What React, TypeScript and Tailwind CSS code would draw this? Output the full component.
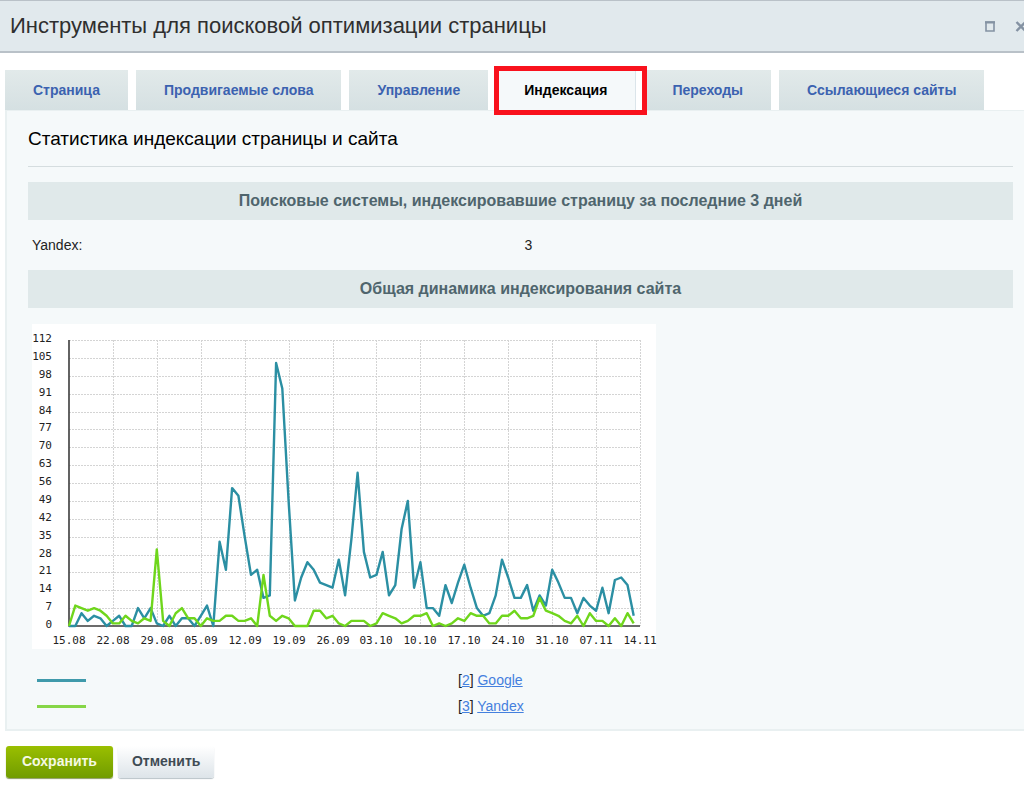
import { useState } from 'react';

const tabs = ['Страница', 'Продвигаемые слова', 'Управление', 'Индексация', 'Переходы', 'Ссылающиеся сайты'];
const highlightedTab = 'Индексация';

const dates = [
  '15.08', '22.08', '29.08', '05.09', '12.09', '19.09', '26.09',
  '03.10', '10.10', '17.10', '24.10', '31.10', '07.11', '14.11',
];

// Indexed pages per day
const google = [
  0, 0, 5, 2, 4, 3, 0, 2, 4, 0, 0, 7, 3, 7, 1, 0, 4, 0, 3, 3, 0, 4, 8, 0, 33, 22, 54, 51, 35, 20,
  22, 11, 12, 103, 93, 49, 10, 19, 25, 22, 17, 16, 15, 26, 12, 34, 60, 29, 19, 20, 29, 12, 16, 38,
  49, 15, 25, 7, 7, 4, 16, 9, 17, 24, 15, 7, 4, 5, 12, 26, 19, 11, 11, 16, 6, 12, 8, 22, 17, 11, 11,
  5, 11, 8, 6, 15, 5, 18, 19, 16, 4,
];
const yandex = [
  0, 8, 7, 6, 7, 6, 4, 1, 1, 4, 2, 1, 3, 2, 30, 2, 0, 5, 7, 3, 3, 0, 3, 2, 2, 4, 4, 2, 2, 3, 0, 20,
  4, 2, 4, 3, 0, 0, 0, 6, 6, 3, 4, 1, 0, 2, 2, 2, 0, 1, 5, 4, 3, 1, 2, 4, 4, 5, 0, 1, 0, 1, 3, 2, 5,
  4, 4, 1, 1, 4, 4, 6, 3, 3, 4, 11, 6, 5, 4, 2, 1, 4, 0, 5, 2, 2, 0, 3, 0, 5, 1,
];

const systems = [
  { id: 2, name: 'Google', line: 'bg-[#3f9aab]' },
  { id: 3, name: 'Yandex', line: 'bg-[#86d647]' },
];

const left = 37;
const bottom = 302;
const plotWidth = 571;
const plotHeight = 286;
const dayX = (day: number) => left + (day * plotWidth) / 91;
const valueY = (value: number) => bottom - (value * plotHeight) / 112;
const toPoints = (values: number[]) => values.map((v, i) => `${dayX(i).toFixed(1)},${valueY(v).toFixed(1)}`).join(' ');

function IndexChart() {
  const steps = Array.from({ length: 17 }, (_, i) => i * 7);

  return (
    <svg width="624" height="325" viewBox="0 0 624 325" role="img" aria-label="Общая динамика индексирования сайта" className="block bg-white overflow-visible">
      <g stroke="#d4d4d4" strokeDasharray="2 1">
        {steps.slice(1).map((v) => (
          <line key={v} x1={left} x2={left + plotWidth} y1={Math.round(valueY(v)) + 0.5} y2={Math.round(valueY(v)) + 0.5} />
        ))}
        {dates.slice(1).map((d, i) => (
          <line key={d} x1={Math.round(dayX((i + 1) * 7)) + 0.5} x2={Math.round(dayX((i + 1) * 7)) + 0.5} y1={bottom - plotHeight} y2={bottom} />
        ))}
      </g>
      <path d={`M${left} ${bottom - plotHeight}V${bottom}H${left + plotWidth}`} fill="none" stroke="#3c3c3c" strokeWidth="1.6" />
      <g fill="none" strokeWidth="2.4" strokeLinejoin="round">
        <polyline points={toPoints(google)} stroke="#2b8fa3" />
        <polyline points={toPoints(yandex)} stroke="#6fd61c" />
      </g>
      <g fill="#222" className="font-['DejaVu_Sans_Mono',monospace] text-[11px]">
        {steps.map((v) => (
          <text key={v} x="20" y={Math.round(valueY(v)) + 2} textAnchor="end">{v}</text>
        ))}
        {dates.map((d, i) => (
          <text key={d} x={Math.round(dayX(i * 7))} y="320" textAnchor="middle">{d}</text>
        ))}
      </g>
    </svg>
  );
}

export default function App() {
  const [active, setActive] = useState(highlightedTab);

  return (
    <div className="min-h-screen overflow-hidden bg-white font-['Liberation_Sans',Arial,sans-serif] text-sm text-[#222]">
      {/* Window title */}
      <header className="flex h-[53px] items-center justify-between border-t border-b-2 border-[#b9c1c8] bg-[#e1e9ed] pl-[10px]">
        <h1 className="text-[22px] leading-7 text-[#2f2f2f]">Инструменты для поисковой оптимизации страницы</h1>
        <div className="-mr-[3px] flex items-center gap-5 text-[#8492a3]">
          <button type="button" aria-label="Развернуть">
            <svg width="10" height="11" viewBox="0 0 10 11" className="block">
              <path d="M1 1V10H9V1" fill="none" stroke="currentColor" strokeWidth="1.6" />
              <path d="M0 1.3H10" stroke="currentColor" strokeWidth="2.4" />
            </svg>
          </button>
          <button type="button" aria-label="Закрыть">
            <svg width="12" height="11" viewBox="0 0 12 11" className="block">
              <path d="M1.5 1L10.5 10M10.5 1L1.5 10" stroke="currentColor" strokeWidth="2.4" />
            </svg>
          </button>
        </div>
      </header>

      <div className="pt-[17px] pl-[5px]">
        <div role="tablist" className="flex gap-2">
          {tabs.map((tab) => (
            <button
              key={tab}
              type="button"
              role="tab"
              aria-selected={tab === active}
              onClick={() => setActive(tab)}
              className={`relative h-10 px-7 text-[14px] font-bold whitespace-nowrap ${
                tab === active
                  ? 'border-r border-[#dbe5ea] bg-[#f5f9fa] text-black'
                  : 'bg-linear-to-b from-[#e2eaea] to-[#d5e0e2] text-[#3b62b0]'
              }`}
            >
              {tab}
              {tab === highlightedTab && (
                <span className="pointer-events-none absolute -top-1 -right-3 -bottom-[5px] -left-[2px] z-10 border-5 border-[#f9121d]" />
              )}
            </button>
          ))}
        </div>

        <main className="border-t border-b-2 border-l-2 border-[#e9f0f1] bg-[#f5f9fa] pt-4 pr-[11px] pb-[10px] pl-[21px]">
          <h2 className="border-b border-[#d5dddf] pb-[15px] text-[19px] leading-6 text-black">
            Статистика индексации страницы и сайта
          </h2>

          <table className="mt-[15px] w-full table-fixed border-collapse">
            <tbody>
              <tr className="h-[38px] bg-[#e0e9ea] text-[16px] leading-5 text-[#4f656d]">
                <th colSpan={2}>Поисковые системы, индексировавшие страницу за последние 3 дней</th>
              </tr>
              <tr className="h-[50px]">
                <td className="pl-1">Yandex:</td>
                <td className="pl-1">3</td>
              </tr>
              <tr className="h-[38px] bg-[#e0e9ea] text-[16px] leading-5 text-[#4f656d]">
                <th colSpan={2}>Общая динамика индексирования сайта</th>
              </tr>
            </tbody>
          </table>

          <div className="mt-4 pl-1">
            <IndexChart />
            <table className="mt-[18px] border-collapse">
              <tbody>
                {systems.map((s) => (
                  <tr key={s.id} className="h-[26px]">
                    <td className="w-[426px] pl-[5px]">
                      <div className={`h-[3px] w-[49px] ${s.line}`} />
                    </td>
                    <td className="whitespace-nowrap">
                      [<a href={`#${s.id}`} className="text-[#4480de] underline">{s.id}</a>]{' '}
                      <a href={`#${s.name}`} className="text-[#4480de] underline">{s.name}</a>
                    </td>
                  </tr>
                ))}
              </tbody>
            </table>
          </div>
        </main>
      </div>

      <footer className="flex gap-[5px] px-[6px] pt-[15px] pb-2">
        <button type="button" className="h-8 rounded-[3px] bg-linear-to-b from-[#9abf00] to-[#719c00] px-4 pb-[2px] text-[14px] font-bold text-[#f5f9e4] shadow-[0_1px_1px_#8a9a60]">
          Сохранить
        </button>
        <button type="button" className="h-8 rounded-[3px] bg-linear-to-b from-white to-[#dde4e9] px-[14px] pb-[2px] text-[14px] font-bold text-[#3f4b54] shadow-[0_1px_1px_#b8c2c8]">
          Отменить
        </button>
      </footer>
    </div>
  );
}
